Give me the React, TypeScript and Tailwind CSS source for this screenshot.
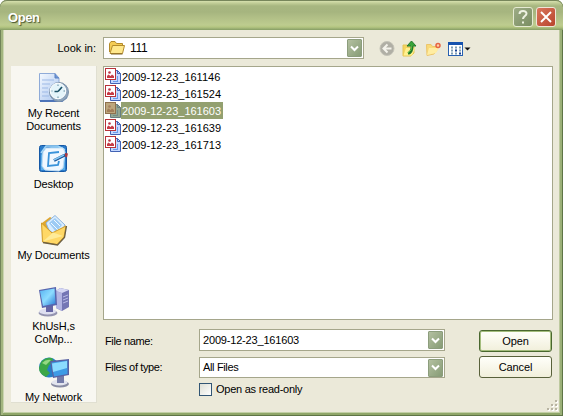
import type { ReactNode } from "react";
import clsx from "clsx";

const files = [
  "2009-12-23_161146",
  "2009-12-23_161524",
  "2009-12-23_161603",
  "2009-12-23_161639",
  "2009-12-23_161713",
];

const RecentIcon = () => (
  <svg width="32" height="32" viewBox="0 0 32 32">
    <defs>
      <linearGradient id="paper" x1="0" y1="0" x2="1" y2="1">
        <stop offset="0" stopColor="#f4f9ff" />
        <stop offset="1" stopColor="#a9c4ee" />
      </linearGradient>
    </defs>
    <path d="M1.500 1.500H17L21 6V28.500H1.500Z" fill="url(#paper)" stroke="#8fabd8" />
    <path d="M4 8h12M4 12h8M4 16h6M4 20h6M4 24h7" stroke="#9db9e6" />
    <path d="M17 1.500V6H21" fill="#6f96d6" stroke="#5b80c0" />
    <path d="M2 29H24L29 25" fill="none" stroke="#4d74b8" strokeWidth="1.800" />
    <circle cx="21" cy="20" r="9.500" fill="#8fa6bd" stroke="#7c92aa" />
    <circle cx="20" cy="19" r="7.800" fill="#e4f4fa" stroke="#fff" />
    <path d="M20 19.500L24 15M20 19.500H16.500" stroke="#1d5368" strokeWidth="1.700" />
    <path d="M20 12.500v1.500M20 24.500v1.500M13.500 19h1M25.500 19h1.500" stroke="#60889c" />
  </svg>
);

const DesktopIcon = () => (
  <svg width="32" height="32" viewBox="0 0 32 32">
    <rect x="1.500" y="2.500" width="27" height="26" rx="2" fill="#2b7ccb" stroke="#1559a6" />
    <path d="M3 12C8 3 21 1 27 6V27H3Z" fill="#5aaeea" />
    <path d="M3 10L8 3H20L27 7" fill="none" stroke="#9fd5f7" strokeWidth="1.500" />
    <path d="M5 9L8 5L25 5L27 9L25 25L21 28L7 27L4 23Z" fill="#f0f8ff" stroke="#c0ddf4" />
    <path d="M21 9L11 10L10 23L20 22L21 18" fill="none" stroke="#3a93da" strokeWidth="1.800" />
    <path d="M16 17.500L27 12" stroke="#164d90" strokeWidth="3" />
    <path d="M16 17L26 12" stroke="#83c7f3" strokeWidth="1.500" />
    <path d="M27 10l3 .5l-1 4l-2-1z" fill="#a83a42" />
  </svg>
);

const DocumentsIcon = () => (
  <svg width="32" height="32" viewBox="0 0 32 32">
    <path d="M4 9L12 3L28 12L27 23L19 31L5 29Z" fill="#dfa62e" />
    <path d="M8 9L17 1.500L27 11L20 23L11 16Z" fill="#d9edff" stroke="#8db4df" />
    <path d="M11 9L17 4L24 11L18 18Z" fill="#9dcbf4" />
    <path d="M13 9l7 7M16 6l6 6" stroke="#f3faff" />
    <path d="M3.500 9L14 19L28 12L26 23L19 30.500L4.500 28Z" fill="#ffd866" stroke="#cf9b28" />
    <path d="M5 27.500L15 18.500L25 22" fill="#ffeb98" />
    <path d="M28.500 12L26.500 23.500L19.500 31L5 28.500" fill="none" stroke="#6d6144" strokeWidth="1.300" />
  </svg>
);

const ComputerIcon = () => (
  <svg width="34" height="32" viewBox="0 0 34 32">
    <defs>
      <linearGradient id="screen" x1="0" y1="0" x2="1" y2="1">
        <stop offset="0" stopColor="#56b2f1" />
        <stop offset=".5" stopColor="#8ddcff" />
        <stop offset="1" stopColor="#2678d4" />
      </linearGradient>
    </defs>
    <path d="M19 6L23 3L32 5V22L25 26L19 23Z" fill="#7476b4" />
    <path d="M19 6L25 8V26L19 23Z" fill="#b2b4e2" />
    <path d="M19 6L23 3L32 5L25 8Z" fill="#d5d7f4" />
    <path d="M26 12l5-2M26 15l5-2M26 18l5-2" stroke="#b9bbe8" />
    <ellipse cx="11" cy="28" rx="9.500" ry="3.500" fill="#9494b0" />
    <ellipse cx="10.500" cy="26.500" rx="8.500" ry="3" fill="#dedff0" />
    <path d="M9 20h7v7H9z" fill="#6666a4" />
    <path d="M2 5L19 2L20 20L5 23Z" fill="#5864ad" />
    <path d="M3 6L17.500 3.500L18.500 18.500L6 21Z" fill="url(#screen)" />
  </svg>
);

const NetworkIcon = () => (
  <svg width="34" height="32" viewBox="0 0 34 32">
    <circle cx="12" cy="11.500" r="10" fill="#247fc7" />
    <path d="M4 6Q9 1 15 2L17 6L12 9L10 14L13 17L9 21Q2 18 2 12Z" fill="#3ca747" />
    <path d="M5 7Q9 3 14 4L9 9Z" fill="#94d983" />
    <ellipse cx="23" cy="28" rx="9" ry="3.500" fill="#888ba3" />
    <ellipse cx="22.500" cy="26.500" rx="8" ry="3" fill="#e2e4ee" />
    <path d="M20 20h7v7h-7z" fill="#747ba8" />
    <path d="M13 5L32 3V19L16 22Z" fill="#5962a3" />
    <path d="M14.500 6.500L30.500 4.500V18L17 20.500Z" fill="#3e9be5" />
    <path d="M15 7.500L30 5V12L16 16Z" fill="#8bdcff" />
  </svg>
);

const places: { lines: string[]; icon: ReactNode }[] = [
  { lines: ["My Recent", "Documents"], icon: <RecentIcon /> },
  { lines: ["Desktop"], icon: <DesktopIcon /> },
  { lines: ["My Documents"], icon: <DocumentsIcon /> },
  { lines: ["KhUsH,s", "CoMp..."], icon: <ComputerIcon /> },
  { lines: ["My Network"], icon: <NetworkIcon /> },
];

const FolderIcon = () => (
  <svg width="16" height="14" viewBox="0 0 16 14">
    <path d="M.500 11V2.500L2 .500H6L7.500 2.500H13.500V5" fill="#f4cc55" stroke="#b38b2c" />
    <path d="M1 12.500L3.500 4.500H15.500L13.500 12.500Z" fill="#ffe88c" stroke="#b38b2c" />
    <path d="M13.500 13H2" stroke="#806528" />
  </svg>
);

const ImageIcon = ({ selected }: { selected: boolean }) => (
  <svg width="16" height="17" viewBox="0 0 16 17" className="shrink-0">
    <path d="M5.500 2.500H12.500L15.500 5.500V15.500H5.500Z" fill={selected ? "#93a591" : "#c4d8ff"} stroke={selected ? "#687e80" : "#4262b4"} />
    <path d="M12.500 2.500V5.500H15.500" fill="none" stroke={selected ? "#687e80" : "#4262b4"} />
    <path d="M8 13.500h5M12.500 8v5" stroke={selected ? "#748c87" : "#6b9bea"} />
    <rect x=".500" y=".500" width="10" height="11" fill={selected ? "#bda77d" : "#fff"} stroke={selected ? "#8f704d" : "#b83238"} />
    <path d="M2 10V8L3.500 6.500L5.500 8L7 6.500L9 8V10Z" fill={selected ? "#a27d59" : "#c63b45"} />
    <circle cx="4.500" cy="4.500" r="1.300" fill={selected ? "#a57e5f" : "#bd3445"} />
  </svg>
);

const DropButton = () => (
  <div className="flex h-[18px] w-[15px] shrink-0 items-center justify-center rounded-[1px] border border-[#8c9d7c] bg-linear-to-br from-[#b3c0a0] to-[#879c76]">
    <svg width="9" height="7" viewBox="0 0 9 7">
      <path d="M1 1.500L4.500 5L8 1.500" fill="none" stroke="#fff" strokeWidth="2" />
    </svg>
  </div>
);

const Combo = ({ children, className }: { children: ReactNode; className?: string }) => (
  <div className={clsx("flex shrink-0 items-center border border-[#a5a68b] bg-white pr-px", className)}>
    <div className="flex grow items-center">{children}</div>
    <DropButton />
  </div>
);

const TitleBar = () => (
  <div className="flex h-[30px] shrink-0 items-center rounded-t-[7px] border-t border-b border-t-[#77865b] border-b-[#8da469] bg-[linear-gradient(to_bottom,#d6e0ae_0px,#c2ce98_2px,#a7b680_5px,#a6b57f_11px,#b2c087_17px,#bdcc8f_24px,#b4c681_26px,#96ab70_28px)] pr-[7px] pl-2">
    <span className="mt-[5px] grow text-[13px] leading-4 font-bold tracking-[-0.4px] text-white [text-shadow:1px_1px_1px_#46552f]">Open</span>
    <div className="mt-[3px] flex gap-[3px]">
      <div className="flex size-5 items-center justify-center rounded-[3px] border border-[#e5ead2] bg-linear-to-br from-[#9dac86] to-[#7a8d62]">
        <svg width="14" height="16" viewBox="0 0 14 16">
          <path d="M3.500 5C3.500 1 10.500 1 10.500 4.500C10.500 7 7 7 7 10M7 12.500V14.500" fill="none" stroke="#eef2e2" strokeWidth="2" />
        </svg>
      </div>
      <div className="flex size-5 items-center justify-center rounded-[3px] border border-[#f0e4d8] bg-linear-to-br from-[#d9765c] to-[#b8432c]">
        <svg width="12" height="12" viewBox="0 0 12 12">
          <path d="M1 1L11 11M11 1L1 11" stroke="#fff" strokeWidth="1.900" />
        </svg>
      </div>
    </div>
  </div>
);

const Toolbar = () => (
  <div className="ml-[15px] flex items-center">
    <svg width="17" height="17" viewBox="0 0 17 17">
      <circle cx="8" cy="8.500" r="7" fill="#b0afa5" stroke="#c4c3b7" />
      <path d="M12.500 8.500H5M8.500 4.500L4.500 8.500L8.500 12.500" fill="none" stroke="#f4f3eb" strokeWidth="2" />
    </svg>
    <svg width="16" height="17" viewBox="0 0 16 17" className="ml-[6px]">
      <path d="M1 5H5L6 7H12V13L9 16H1Z" fill="#f4d45f" stroke="#e3c458" />
      <path d="M1.500 15.500L4 8H13L10 15.500Z" fill="#fff08f" />
      <path d="M6 13.500Q10.500 12 10 5" fill="none" stroke="#22782a" strokeWidth="2.800" />
      <path d="M5 6L9.500 1L14 6Z" fill="#37a43b" stroke="#22782a" />
      <path d="M6 13Q10 11 10 5" fill="none" stroke="#55bd42" />
    </svg>
    <svg width="17" height="16" viewBox="0 0 17 16" className="ml-[7px]">
      <path d="M1.500 3.500H6L7.500 5.500H12V9L9 13L2 14.500Z" fill="#f9da78" stroke="#ecc56a" />
      <path d="M2 14L4 7H14L11 12Z" fill="#ffeda2" />
      <circle cx="13" cy="4.500" r="2" fill="#ffd3a6" stroke="#e66443" strokeWidth="1.500" />
    </svg>
    <svg width="24" height="16" viewBox="0 0 24 16" className="ml-[6px]">
      <rect x=".500" y="1.500" width="14" height="13" fill="#fff" stroke="#2760b0" />
      <path d="M0 2.500H15" stroke="#1552ae" strokeWidth="3" />
      <path d="M3 6.500h2M7 6.500h2M11 6.500h2M3 9.500h2M11 9.500h2M3 12.500h2M7 12.500h2" stroke="#7d9db4" strokeWidth="2" />
      <path d="M7 9.500h2M11 12.500h2" stroke="#153f92" strokeWidth="2" />
      <path d="M16.500 6.500h6l-3 3z" fill="#111" />
    </svg>
  </div>
);

const Places = () => (
  <div className="h-[337px] w-[86px] shrink-0 border-r border-b border-[#e0dfd1] bg-[#f8f7f1] tracking-[-0.1px]">
    {places.map((place) => (
      <div key={place.lines[0]} className="flex h-[71px] flex-col items-center pt-[6px] last:h-[53px]">
        <div className="mb-[3px] h-8">{place.icon}</div>
        {place.lines.map((line) => (
          <span key={line} className="leading-[13px] whitespace-nowrap">{line}</span>
        ))}
      </div>
    ))}
  </div>
);

const FileList = () => (
  <div className="h-[254px] w-[450px] border border-[#a5a68b] bg-white pt-px pl-px">
    {files.map((file, i) => (
      <div key={file} className="flex h-[17px] items-center">
        <ImageIcon selected={i === 2} />
        <span className={clsx("h-[17px] w-[102px] pl-px leading-[18px]", i === 2 && "bg-[#93a070] text-white")}>{file}</span>
      </div>
    ))}
  </div>
);

const buttonClass = "flex h-[22px] w-[73px] items-center justify-center rounded-[3px] border bg-linear-to-b from-[#fffffa] to-[#f1efdb] tracking-[-0.1px]";

const FileForm = () => (
  <div className="flex pt-[9px]">
    <div className="w-[96px] pl-[2px] tracking-[-0.36px]">
      <div className="h-7 leading-6">File name:</div>
      <div className="leading-[20px]">Files of type:</div>
    </div>
    <div className="w-[246px]">
      <Combo className="h-[22px] pl-[3px] tracking-[-0.18px]">2009-12-23_161603</Combo>
      <Combo className="mt-[6px] h-[21px] pl-[3px] tracking-[-0.35px]">All Files</Combo>
      <div className="mt-[5px] flex h-[13px] items-center gap-1">
        <div className="size-[13px] border border-[#315574] bg-linear-to-br from-[#dedfd5] to-white" />
        <span className="tracking-[-0.25px]">Open as read-only</span>
      </div>
    </div>
    <div className="ml-[34px] flex flex-col gap-1 pt-px">
      <button className={clsx(buttonClass, "border-[#49672f] shadow-[inset_0_0_0_1px_#a4bd7d]")}>Open</button>
      <button className={clsx(buttonClass, "border-[#59613b]")}>Cancel</button>
    </div>
  </div>
);

const Grip = () => (
  <svg width="11" height="11" viewBox="0 0 11 11" className="absolute right-[5px] bottom-[5px]">
    <path d="M9 1h2v2H9zM5 5h2v2H5zM9 5h2v2H9zM1 9h2v2H1zM5 9h2v2H5zM9 9h2v2H9z" fill="#fff" />
    <path d="M8 0h2v2H8zM4 4h2v2H4zM8 4h2v2H8zM0 8h2v2H0zM4 8h2v2H4zM8 8h2v2H8z" fill="#b8b4a2" />
  </svg>
);

export default function App() {
  return (
    <div className="h-[416px] w-[563px] bg-white font-['Liberation_Sans',sans-serif] text-[11px] leading-[13px] text-black">
      <div className="relative flex h-full flex-col overflow-hidden rounded-t-[7px] bg-[#ebe9d9] shadow-[inset_1px_0_#718459,inset_-1px_0_#5e7546,inset_0_-1px_#5e7546,inset_3px_0_#a2b57f,inset_-3px_0_#9bb078,inset_0_-3px_#8fa669,inset_4px_0_#cbd5b1,inset_-4px_0_#bdc99f,inset_0_-4px_#c2cfa5]">
        <TitleBar />
        <div className="flex h-[36px] shrink-0 pt-[7px]">
          <div className="w-[103px] pr-[7px] text-right leading-[23px]">Look in:</div>
          <Combo className="h-[22px] w-[261px] pl-[5px]">
            <FolderIcon />
            <span className="ml-[5px] text-[12px] tracking-[-0.3px]">111</span>
          </Combo>
          <div className="flex h-[23px] items-center">
            <Toolbar />
          </div>
        </div>
        <div className="flex pl-[11px]">
          <Places />
          <div className="ml-[6px]">
            <FileList />
            <FileForm />
          </div>
        </div>
        <Grip />
      </div>
    </div>
  );
}
